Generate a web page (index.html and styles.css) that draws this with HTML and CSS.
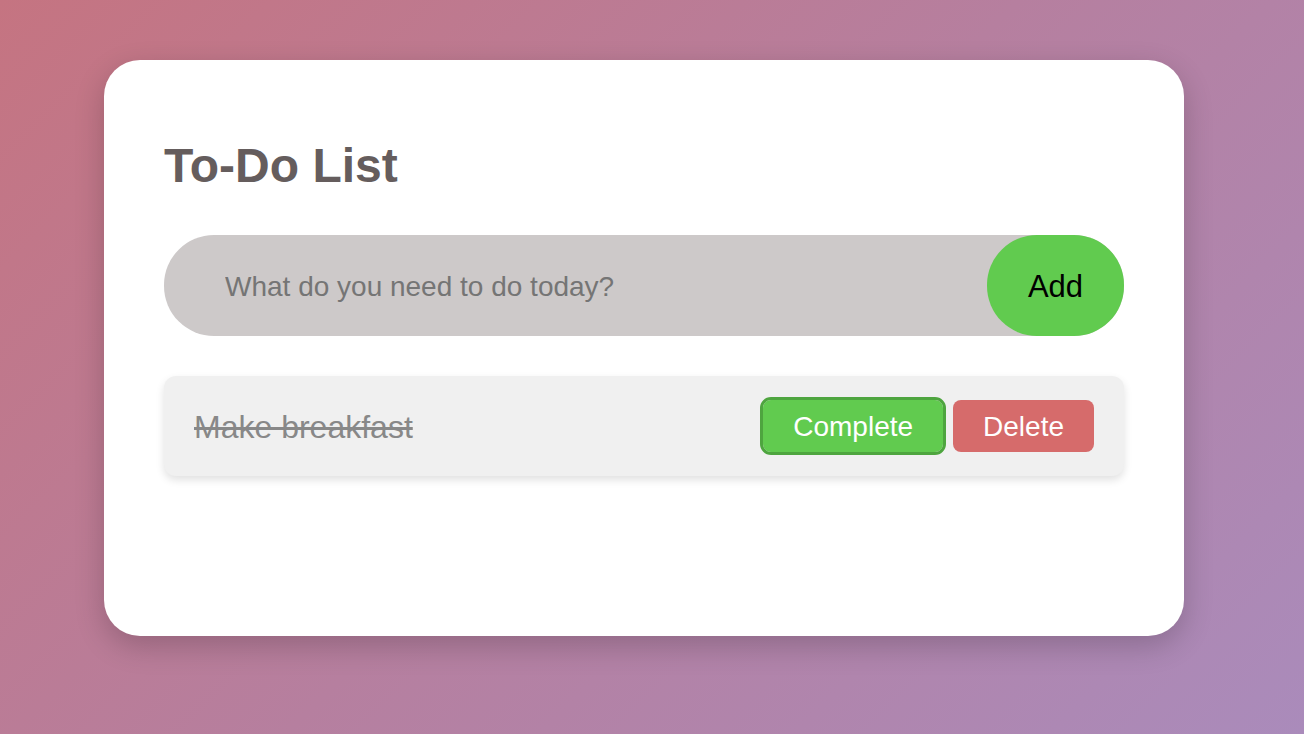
FILE: index.html
```html
<!DOCTYPE html>
<html lang="en">
<head>
<meta charset="utf-8">
<title>To-Do List</title>
<link rel="stylesheet" href="styles.css">
</head>
<body>
  <main class="card">
    <h1 class="title">To-Do List</h1>
    <div class="entry">
      <input class="entry-input" type="text" placeholder="What do you need to do today?">
      <button class="add-btn">Add</button>
    </div>
    <ul class="list">
      <li class="item">
        <span class="item-text done">Make breakfast</span>
        <div class="actions">
          <button class="btn btn-complete">Complete</button>
          <button class="btn btn-delete">Delete</button>
        </div>
      </li>
    </ul>
  </main>
</body>
</html>
```
FILE: styles.css
```css
* { box-sizing: border-box; }
html, body { height: 100%; }
body {
  margin: 0;
  padding: 60px 120px 0 104px;
  background: linear-gradient(135deg, #c57481 0%, #b67f9f 50%, #aa8bbb 100%);
  font-family: "Liberation Sans", Arial, Helvetica, sans-serif;
}
.card {
  background: #fff;
  border-radius: 36px;
  min-height: 576px;
  padding: 60px;
  box-shadow: 0 10px 30px rgba(0, 0, 0, 0.2);
}
.title {
  margin: 19px 0 42px;
  font-size: 48px;
  font-weight: bold;
  color: #655d5d;
  line-height: 54px;
}
.entry {
  display: flex;
  height: 101px;
  background: #cdc9c9;
  border-radius: 50px;
}
.entry-input {
  flex: 1;
  min-width: 0;
  border: none;
  outline: none;
  background: transparent;
  padding: 3px 0 0 61px;
  font-family: inherit;
  font-size: 28px;
  color: #333;
}
.entry-input::placeholder { color: #757575; }
.add-btn {
  width: 137px;
  border: none;
  border-radius: 50px;
  background: #61cb4f;
  color: #000;
  font-family: inherit;
  font-size: 31px;
  padding: 2px 0 0;
}
.list {
  list-style: none;
  margin: 40px 0 0;
  padding: 0;
}
.item {
  display: flex;
  align-items: center;
  justify-content: space-between;
  height: 100px;
  padding: 0 30px;
  background: #f0f0f0;
  border-radius: 12px;
  box-shadow: 0 4px 8px rgba(0, 0, 0, 0.12);
}
.item-text {
  font-size: 32px;
  color: #888;
  padding-top: 3px;
}
.item-text.done { text-decoration: line-through; }
.actions {
  display: flex;
  gap: 10px;
}
.btn {
  height: 52px;
  padding: 2px 30px 0;
  border: none;
  border-radius: 8px;
  color: #fff;
  font-family: inherit;
  font-size: 28px;
}
.btn-complete {
  background: #61cb4f;
  outline: 3px solid #4ea53f;
}
.btn-delete { background: #d66b6b; }
```
